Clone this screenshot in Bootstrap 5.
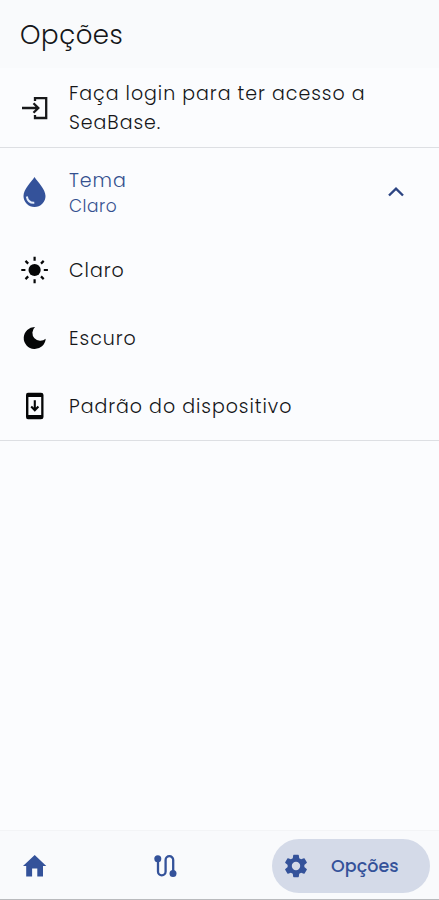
<!DOCTYPE html>
<html lang="pt-BR">
<head>
<meta charset="utf-8">
<meta name="viewport" content="width=device-width, initial-scale=1">
<title>Opções</title>
<link href="https://cdn.jsdelivr.net/npm/bootstrap@5.3.0/dist/css/bootstrap.min.css" rel="stylesheet">
<style>
body { font-family: Poppins, Inter, "Open Sans", sans-serif; background: #fbfcfe; color: #151619; font-size: 19px; line-height: 29px; }
.app-header { height: 68px; padding-left: 20px; background: #f9fafc; }
.app-title { font-size: 26px; line-height: 36px; font-weight: 300; letter-spacing: .55px; margin-top: 2px; }
.option { height: 68px; padding-left: 21px; gap: 20px; }
.option svg { width: 28px; height: 28px; flex: none; overflow: visible; }
.option-login { height: 79px; padding-top: 1px; }
.option-theme { height: 88px; }
.rule { height: 1px; background: #dddfe3; }
.brand { color: #34529a; }
.label { font-weight: 300; letter-spacing: .95px; }
.theme-text { color: #34508f; }
.label-sub { font-size: 17px; line-height: 23px; letter-spacing: .5px; }
.option .chevron { width: 28px; margin-right: 29px; }
.bottom-nav { height: 70px; background: #f9fafc; border-top: 1px solid #f3f4f6; border-bottom: 1px solid #b9babd; padding: 0 9px 0 21px; }
.bottom-nav svg { width: 28px; height: 28px; flex: none; }
.nav-icon { margin-top: 1px; }
.route-link { margin-left: 102px; }
.active-pill { width: 158px; height: 54px; background: #d4dae8; padding-left: 10px; gap: 21px; margin-top: 2px; }
.pill-text { font-size: 17.5px; font-weight: 500; letter-spacing: .05px; }
</style>
<script src="https://cdn.jsdelivr.net/npm/bootstrap@5.3.0/dist/js/bootstrap.bundle.min.js"></script>
</head>
<body>
<div class="vh-100 d-flex flex-column overflow-hidden">
  <header class="app-header d-flex align-items-center"><h1 class="app-title mb-0">Opções</h1></header>
  <main class="flex-grow-1">
    <div class="option option-login d-flex align-items-center">
      <svg viewBox="0 0 28 28" fill="none" stroke="#17181a" stroke-width="2.3"><path d="M14 7V4.2H25.2V24H14V21M1 14H17M12.5 9.2L17.3 14L12.5 18.8"/></svg>
      <div class="label">Faça login para ter acesso a<br>SeaBase.</div>
    </div>
    <div class="rule"></div>
    <div class="option option-theme brand d-flex align-items-center">
      <svg viewBox="0 0 28 28"><path fill="#34529a" d="M13.5-1C16.5 4 24.5 11 24.5 18A11 11 0 0 1 2.5 18C2.5 11 10.5 4 13.5-1Z"/><path d="M5.8 18.5C6.5 22.5 9.4 25 13.3 24.8" fill="none" stroke="#e4edfb" stroke-width="2"/></svg>
      <div class="flex-grow-1 theme-text"><div class="label">Tema</div><div class="label label-sub">Claro</div></div>
      <svg class="chevron" viewBox="0 0 28 28" fill="none" stroke="#2c4482" stroke-width="2.4"><path d="M7 17.5L14 10.7L21 17.5"/></svg>
    </div>
    <div class="option d-flex align-items-center">
      <svg viewBox="0 0 28 28" stroke="#050607" stroke-width="2.2"><circle cx="13.6" cy="14" r="6.1" fill="#050607" stroke="none"/><path d="M13.6 .7V4.8M13.6 23.2V27.3M.3 14H4.4M22.8 14H26.9M4.5 4.9L7.2 7.6M20 20.4L22.7 23.1M22.7 4.9L20 7.6M7.2 20.4L4.5 23.1"/></svg>
      <div class="label">Claro</div>
    </div>
    <div class="option d-flex align-items-center">
      <svg viewBox="0 0 28 28"><path fill="#050607" d="M14 3A11 11 0 1 0 24.7 14.8A6.8 6.8 0 0 1 14 3Z"/></svg>
      <div class="label">Escuro</div>
    </div>
    <div class="option d-flex align-items-center">
      <svg viewBox="0 0 28 28"><path fill="#050607" fill-rule="evenodd" d="M7 .7H20Q22.5 .7 22.5 3V25Q22.5 27.3 20 27.3H7Q5 27.3 5 25V3Q5 .7 7 .7ZM7.4 5V23H20.2V5Z"/><path d="M13.8 8.3V18M10.2 14.6L13.8 18.2L17.4 14.6" fill="none" stroke="#050607" stroke-width="2.1"/></svg>
      <div class="label">Padrão do dispositivo</div>
    </div>
    <div class="rule"></div>
  </main>
  <nav class="bottom-nav d-flex align-items-center">
    <a href="#" class="nav-icon" aria-label="Início"><svg class="d-block" viewBox="0 0 28 28"><path fill="#34529a" d="M13.7 3L25.3 13.9H22V24.5H16.3V16.5H11.1V24.5H5.2V13.9H2Z"/></svg></a>
    <a href="#" class="nav-icon route-link" aria-label="Rotas"><svg class="d-block" viewBox="0 0 28 28"><path fill="none" stroke="#34529a" stroke-width="2.3" d="M7 7V19.5A3.8 3.8 0 0 0 14.6 19.5V8A3.8 3.8 0 0 1 22.2 8V21"/><circle cx="6.8" cy="6.7" r="3.5" fill="#34529a"/><circle cx="22" cy="21.5" r="3.5" fill="#34529a"/></svg></a>
    <a href="#" class="active-pill rounded-pill d-flex align-items-center ms-auto text-decoration-none brand">
      <svg viewBox="0 0 24 24"><path fill="#34529a" d="M19.14 12.94c.04-.3.06-.61.06-.94s-.02-.64-.07-.94l2.03-1.58c.18-.14.23-.41.12-.61l-1.92-3.32c-.12-.22-.37-.29-.59-.22l-2.39.96c-.5-.38-1.03-.7-1.62-.94l-.36-2.54c-.04-.24-.24-.41-.48-.41h-3.84c-.24 0-.43.17-.47.41l-.36 2.54c-.59.24-1.13.57-1.62.94l-2.39-.96c-.22-.08-.47 0-.59.22L2.74 8.87c-.12.21-.08.47.12.61l2.03 1.58c-.05.3-.09.63-.09.94s.02.64.07.94l-2.03 1.58c-.18.14-.23.41-.12.61l1.92 3.32c.12.22.37.29.59.22l2.39-.96c.5.38 1.03.7 1.62.94l.36 2.54c.05.24.24.41.48.41h3.84c.24 0 .44-.17.47-.41l.36-2.54c.59-.24 1.13-.56 1.62-.94l2.39.96c.22.08.47 0 .59-.22l1.92-3.32c.12-.22.07-.47-.12-.61l-2.01-1.58zM12 15.6a3.6 3.6 0 1 1 0-7.2 3.6 3.6 0 0 1 0 7.2z"/></svg>
      <span class="pill-text">Opções</span>
    </a>
  </nav>
</div>
</body>
</html>
